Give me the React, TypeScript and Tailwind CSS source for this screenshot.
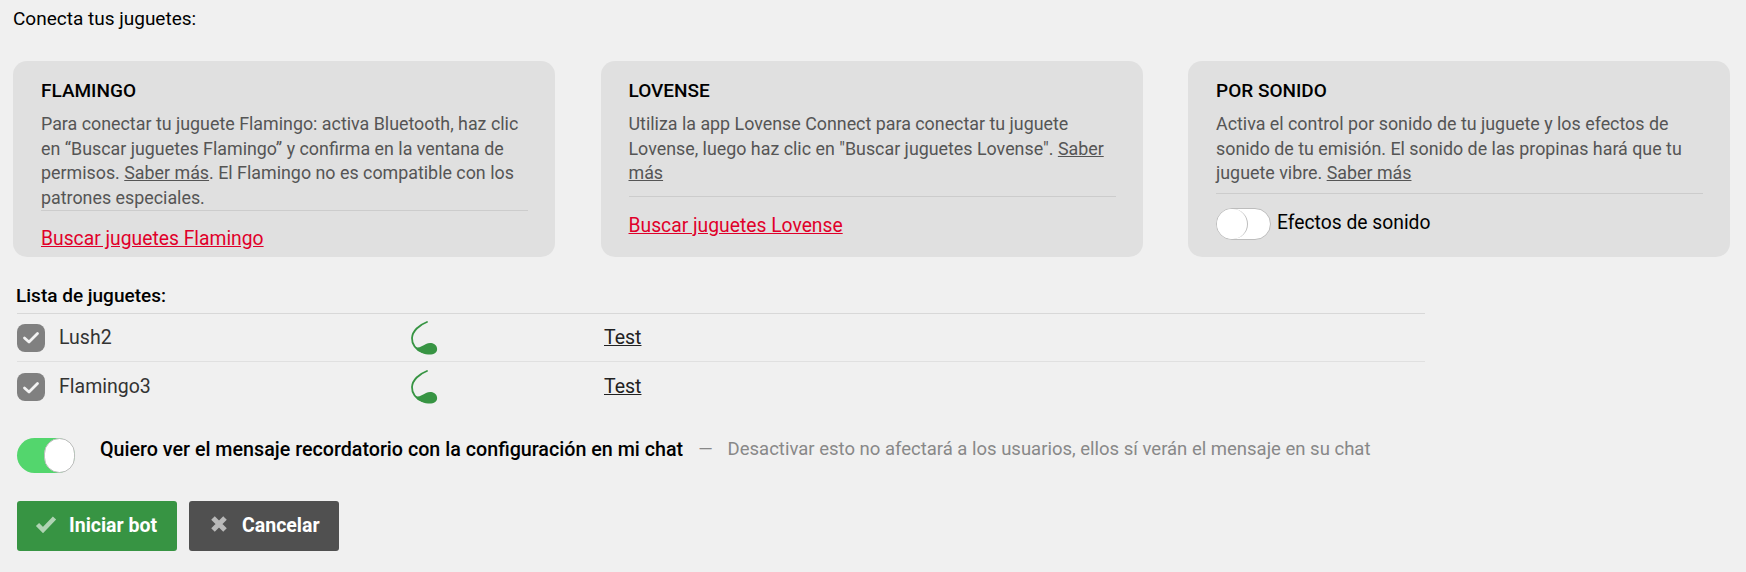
const ff = "font-['Roboto',sans-serif]";

function Card({ title, children, footer, hrClass }: { title: string; children: React.ReactNode; footer: React.ReactNode; hrClass: string }) {
  return (
    <div className="w-[542px] h-[196px] rounded-[14px] bg-[#e0e0e0] pl-[28px] pr-[27px] pt-[18px] overflow-hidden">
      <div className="text-[19px] leading-[24px] font-medium text-black">{title}</div>
      <p className="mt-[9px] text-[17.850px] leading-[24.600px] text-[#555555]">{children}</p>
      <div className={`border-t border-[#cccccc] ${hrClass}`}>{footer}</div>
    </div>
  );
}

function Leaf() {
  return (
    <svg width="30" height="36" viewBox="0 0 30 36" className="block">
      <path d="M18 2C10 5 3.500 11 3 18C2.700 24 7 30 13 32" fill="none" stroke="#379443" strokeWidth="1.800" strokeLinecap="round" />
      <path d="M6 27C10 28.500 13 26 17 24C21 22 27 23 28 28C29 33 24 35 19 34.500C13 34 9 31 6 27Z" fill="#379443" />
    </svg>
  );
}

function Row({ name, last }: { name: string; last?: boolean }) {
  return (
    <div className={`flex items-center ${last ? "h-[49px] pt-[1px]" : "h-[48px] border-b border-[#e0e0e0]"}`}>
      <div className="flex h-[28px] w-[28px] items-center justify-center rounded-[8px] bg-[#808080]">
        <svg width="18" height="15" viewBox="0 0 18 15"><path d="M2.500 8L7 12L15.500 3.500" fill="none" stroke="#ffffff" strokeOpacity="0.9" strokeWidth="2.800" strokeLinecap="round" strokeLinejoin="round" /></svg>
      </div>
      <div className="ml-[14px] w-[350px] text-[19.500px] text-[#333333]">{name}</div>
      <div className="w-[195px]"><Leaf /></div>
      <a className="text-[19.500px] text-[#222222] underline">Test</a>
    </div>
  );
}

export default function App() {
  return (
    <div className={`min-h-[572px] w-full bg-[#f0f0f0] pl-[13px] ${ff}`}>
      <div className="pt-[7px] text-[19px] leading-[24px] text-black">Conecta tus juguetes:</div>
      <div className="mt-[30px] flex w-[1717px] justify-between">
        <Card title="FLAMINGO" hrClass="mt-0 pt-[16px]" footer={<a className="text-[19.300px] leading-[24px] text-[#e0002a] underline">Buscar juguetes Flamingo</a>}>
          Para conectar tu juguete Flamingo: activa Bluetooth, haz clic en “Buscar juguetes Flamingo” y confirma en la ventana de permisos. <span className="underline">Saber más</span>. El Flamingo no es compatible con los patrones especiales.
        </Card>
        <Card title="LOVENSE" hrClass="mt-[10px] pt-[17px]" footer={<a className="text-[19.300px] leading-[24px] text-[#e0002a] underline">Buscar juguetes Lovense</a>}>
          Utiliza la app Lovense Connect para conectar tu juguete Lovense, luego haz clic en "Buscar juguetes Lovense". <span className="underline">Saber más</span>
        </Card>
        <Card title="POR SONIDO" hrClass="mt-[7px] pt-[14px]" footer={
          <div className="flex items-center gap-[6px]">
            <div className="h-[32px] w-[55px] rounded-full border border-[#bdbdbd] bg-white">
              <div className="h-[30px] w-[31px] rounded-full border-r border-[#bdbdbd] bg-white" />
            </div>
            <span className="text-[19.300px] text-black">Efectos de sonido</span>
          </div>
        }>
          Activa el control por sonido de tu juguete y los efectos de sonido de tu emisión. El sonido de las propinas hará que tu juguete vibre. <span className="underline">Saber más</span>
        </Card>
      </div>

      <div className="mt-[24px] w-[1412px] pl-[4px]">
        <div className="-ml-[1px] text-[19px] leading-[30px] font-medium text-black">Lista de juguetes:</div>
      </div>
      <div className="mt-[2px] ml-[4px] w-[1408px] border-t border-[#d8d8d8]">
        <Row name="Lush2" />
        <Row name="Flamingo3" last />
      </div>

      <div className="mt-[27px] ml-[4px] flex items-center">
        <div className="flex h-[35px] w-[58px] justify-end rounded-full bg-[#53d66d]">
          <div className="h-[35px] w-[31px] rounded-full border border-[#bdbdbd] bg-white" />
        </div>
        <div className="ml-[25px] -mt-[11px] flex items-center">
          <span className="text-[19.700px] font-medium text-black">Quiero ver el mensaje recordatorio con la configuración en mi chat</span>
          <span className="ml-[15px] text-[18.500px] text-[#888888]">—</span>
          <span className="ml-[15px] text-[18.500px] text-[#888888]">Desactivar esto no afectará a los usuarios, ellos sí verán el mensaje en su chat</span>
        </div>
      </div>

      <div className="mt-[28px] ml-[4px] flex gap-[12px]">
        <button className="flex h-[50px] w-[160px] items-center rounded-[3px] bg-[#379443] pl-[18px] text-[19.500px] font-bold text-white">
          <svg className="-mt-[4px]" width="22" height="18" viewBox="0 0 22 18"><path d="M2.500 9.500L8 15L19.500 3" fill="none" stroke="#ffffff" strokeOpacity="0.6" strokeWidth="4.500" /></svg>
          <span className="ml-[12px]">Iniciar bot</span>
        </button>
        <button className="flex h-[50px] w-[150px] items-center rounded-[3px] bg-[#505050] pl-[21px] text-[19.500px] font-bold text-white">
          <svg className="-mt-[4px]" width="18" height="18" viewBox="0 0 18 18"><path d="M3 3L15 15M15 3L3 15" fill="none" stroke="#ffffff" strokeOpacity="0.6" strokeWidth="5" /></svg>
          <span className="ml-[14px]">Cancelar</span>
        </button>
      </div>
    </div>
  );
}
